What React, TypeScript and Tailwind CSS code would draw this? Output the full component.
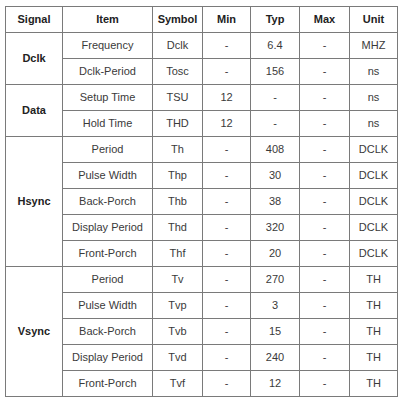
import React from 'react';

// ---------------------------------------------------------------------------
// Timing data
// ---------------------------------------------------------------------------
type Row = { item: string; symbol: string; min: string; typ: string; max: string; unit: string };
type Group = { signal: string; rows: Row[] };

const groups: Group[] = [
  {
    signal: 'Dclk',
    rows: [
      { item: 'Frequency', symbol: 'Dclk', min: '-', typ: '6.4', max: '-', unit: 'MHZ' },
      { item: 'Dclk-Period', symbol: 'Tosc', min: '-', typ: '156', max: '-', unit: 'ns' },
    ],
  },
  {
    signal: 'Data',
    rows: [
      { item: 'Setup Time', symbol: 'TSU', min: '12', typ: '-', max: '-', unit: 'ns' },
      { item: 'Hold Time', symbol: 'THD', min: '12', typ: '-', max: '-', unit: 'ns' },
    ],
  },
  {
    signal: 'Hsync',
    rows: [
      { item: 'Period', symbol: 'Th', min: '-', typ: '408', max: '-', unit: 'DCLK' },
      { item: 'Pulse Width', symbol: 'Thp', min: '-', typ: '30', max: '-', unit: 'DCLK' },
      { item: 'Back-Porch', symbol: 'Thb', min: '-', typ: '38', max: '-', unit: 'DCLK' },
      { item: 'Display Period', symbol: 'Thd', min: '-', typ: '320', max: '-', unit: 'DCLK' },
      { item: 'Front-Porch', symbol: 'Thf', min: '-', typ: '20', max: '-', unit: 'DCLK' },
    ],
  },
  {
    signal: 'Vsync',
    rows: [
      { item: 'Period', symbol: 'Tv', min: '-', typ: '270', max: '-', unit: 'TH' },
      { item: 'Pulse Width', symbol: 'Tvp', min: '-', typ: '3', max: '-', unit: 'TH' },
      { item: 'Back-Porch', symbol: 'Tvb', min: '-', typ: '15', max: '-', unit: 'TH' },
      { item: 'Display Period', symbol: 'Tvd', min: '-', typ: '240', max: '-', unit: 'TH' },
      { item: 'Front-Porch', symbol: 'Tvf', min: '-', typ: '12', max: '-', unit: 'TH' },
    ],
  },
];

const headers = ['Signal', 'Item', 'Symbol', 'Min', 'Typ', 'Max', 'Unit'];
const widths = ['w-[57px]', 'w-[90px]', 'w-[50px]', 'w-[48px]', 'w-[49px]', 'w-[50px]', 'w-[48px]'];

const cell = 'border border-[#7a7a7a] h-[26px] p-0 text-center align-middle';

export default function App() {
  return (
    <div className="bg-white w-[403px] h-[400px] pt-[6px] pl-[5px] font-['Liberation_Sans',Arial,sans-serif] text-[11px] text-[#3a3a3a]">
      <table className="table-fixed border-collapse border border-[#5a5a5a] w-[392px]">
        <colgroup>
          {widths.map((w, i) => (
            <col key={i} className={w} />
          ))}
        </colgroup>
        <thead>
          <tr>
            {headers.map((h) => (
              <th key={h} className={`${cell} font-bold text-[#222]`}>
                {h}
              </th>
            ))}
          </tr>
        </thead>
        <tbody>
          {groups.map((g) =>
            g.rows.map((r, i) => (
              <tr key={g.signal + r.item}>
                {i === 0 && (
                  <td rowSpan={g.rows.length} className={`${cell} font-bold text-[#222]`}>
                    {g.signal}
                  </td>
                )}
                <td className={cell}>{r.item}</td>
                <td className={cell}>{r.symbol}</td>
                <td className={cell}>{r.min}</td>
                <td className={cell}>{r.typ}</td>
                <td className={cell}>{r.max}</td>
                <td className={cell}>{r.unit}</td>
              </tr>
            )),
          )}
        </tbody>
      </table>
    </div>
  );
}
